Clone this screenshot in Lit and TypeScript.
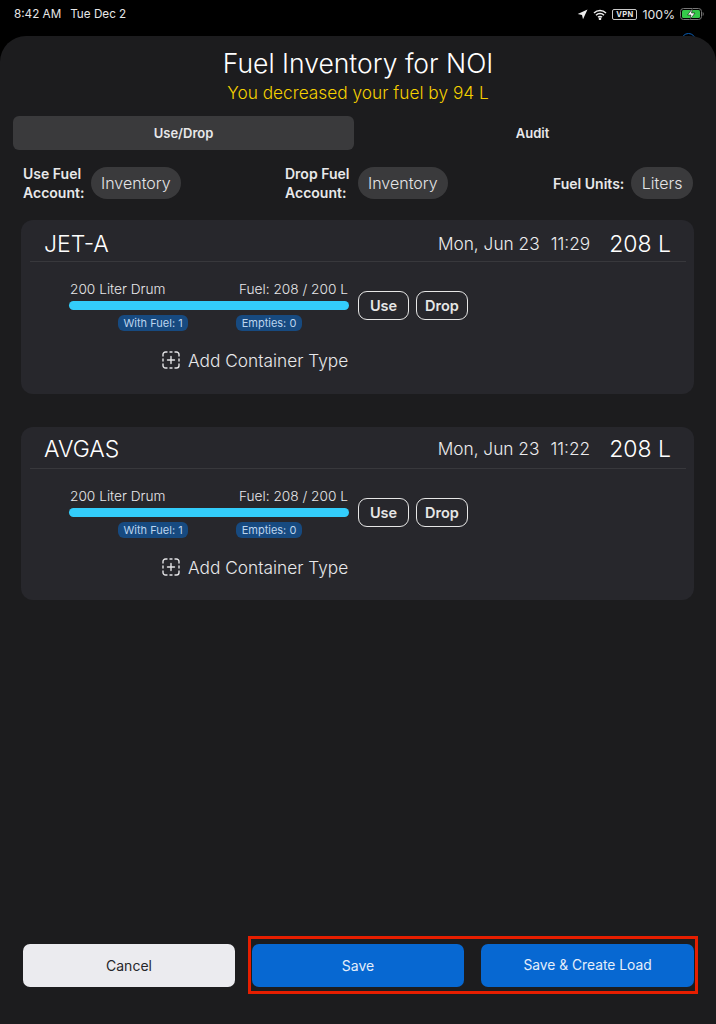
import { LitElement, html, css, svg } from 'lit';
import { customElement } from 'lit/decorators.js';

const cards = [
  { name: 'JET-A', date: 'Mon, Jun 23', time: '11:29', total: '208 L' },
  { name: 'AVGAS', date: 'Mon, Jun 23', time: '11:22', total: '208 L' },
];

const addIcon = svg`
  <svg class="add-icon" viewBox="0 0 18 18" width="18" height="18" fill="none" stroke="#e4e4e6" stroke-width="1.4" stroke-linecap="round">
    <path d="M1 5V3.5A2.5 2.5 0 0 1 3.5 1H5M13 1h1.5A2.5 2.5 0 0 1 17 3.5V5M17 13v1.5a2.5 2.5 0 0 1-2.5 2.5H13M5 17H3.5A2.5 2.5 0 0 1 1 14.5V13" />
    <path d="M9 5.5v7M5.5 9h7M8 1h2M8 17h2M1 8v2M17 8v2" />
  </svg>
`;

@customElement('app-root')
export class AppRoot extends LitElement {
  static styles = css`
    :host {
      display: block;
      width: 716px;
      height: 1024px;
      overflow: hidden;
      background: #000;
      color: #f2f2f4;
      font-family: Inter, 'Liberation Sans', sans-serif;
      position: relative;
    }

    .status {
      height: 36px;
      box-sizing: border-box;
      padding: 0 14px 8px;
      display: flex;
      align-items: center;
      justify-content: space-between;
      font-size: 11.7px;
      color: #e6e6e6;
    }

    .status-left {
      display: flex;
      gap: 9px;
    }

    .status-right {
      display: flex;
      align-items: center;
      gap: 5px;
      margin-right: -2px;
      font-size: 12.3px;
    }

    .vpn {
      font-size: 7.5px;
      font-weight: 700;
      line-height: 9px;
      padding: 0 3px;
      border: 1px solid #c8c8c8;
      border-radius: 2px;
      letter-spacing: 0.3px;
    }

    .peek {
      position: absolute;
      left: 681px;
      top: 33px;
      width: 13px;
      height: 13px;
      border: 1.5px solid #0a5fb8;
      border-radius: 50%;
    }

    .sheet {
      position: relative;
      height: 988px;
      box-sizing: border-box;
      background: #1c1c1e;
      border-radius: 26px 26px 0 0;
      display: flex;
      flex-direction: column;
    }

    .title {
      margin-top: 11px;
      text-align: center;
      font-size: 26.5px;
      line-height: 32px;
      font-weight: 300;
      color: #fff;
    }

    .subtitle {
      margin-top: 2px;
      text-align: center;
      font-size: 17.3px;
      line-height: 24px;
      font-weight: 300;
      color: #f5d000;
    }

    .segments {
      margin: 11px 13px 0;
      display: grid;
      grid-template-columns: 341px 1fr;
      height: 34px;
      font-size: 13px;
      font-weight: 600;
      color: #e8e8ea;
    }

    .segment {
      display: flex;
      align-items: center;
      justify-content: center;
      border-radius: 6px;
    }

    .segment.active {
      background: #3a3a3c;
    }

    .segment.audit {
      padding-left: 8px;
    }

    .accounts {
      margin: 14px 23px 0;
      height: 32px;
      display: grid;
      grid-template-columns: 262px 267px 1fr;
      font-size: 14px;
      font-weight: 600;
      line-height: 19px;
      color: #e8e8ea;
    }

    .account {
      display: flex;
      align-items: center;
    }

    .account-label {
      width: 68px;
    }

    .account-label.wide {
      width: 73px;
    }

    .account.units {
      justify-content: flex-end;
      gap: 7px;
    }

    .pill {
      height: 32px;
      box-sizing: border-box;
      padding: 0 10px;
      display: flex;
      align-items: center;
      border-radius: 16px;
      background: #3a3a3c;
      font-size: 16px;
      font-weight: 300;
      color: #e4e4e6;
    }

    .units .pill {
      padding: 0 10.5px;
    }

    .card {
      margin: 24px 22px 0 21px;
      height: 174px;
      box-sizing: border-box;
      padding: 0 8px 0 9px;
      border-radius: 12px;
      background: #27272c;
    }

    .card + .card {
      margin-top: 33px;
      height: 173px;
    }

    .card-head {
      height: 42px;
      box-sizing: border-box;
      padding: 6px 15px 0 14px;
      display: flex;
      align-items: center;
      border-bottom: 1px solid #38383c;
      font-weight: 300;
      color: #fff;
    }

    .card + .card .card-head {
      padding-top: 2px;
    }

    .fuel-name {
      font-size: 23px;
      flex: 1;
    }

    .fuel-date {
      font-size: 17.3px;
      display: flex;
      gap: 11px;
      color: #ececee;
    }

    .fuel-total {
      font-size: 23px;
      margin-left: 19px;
    }

    .container-row {
      margin: 18px 0 0 39px;
      display: flex;
      align-items: flex-start;
      gap: 9px;
    }

    .container {
      width: 280px;
    }

    .container-labels {
      display: flex;
      justify-content: space-between;
      padding: 0 1px;
      font-size: 13.7px;
      line-height: 18px;
      font-weight: 300;
      color: #e8e8ea;
    }

    .bar {
      margin-top: 3px;
      height: 9px;
      border-radius: 5px;
      background: #33cdfb;
    }

    .counts {
      margin-top: 5px;
      display: flex;
      padding-left: 49px;
      gap: 48px;
    }

    .count {
      height: 16px;
      padding: 0 5.5px;
      display: flex;
      align-items: center;
      border-radius: 6px;
      background: #174a80;
      font-size: 11px;
      color: #bcd4ee;
    }

    .actions {
      display: flex;
      gap: 7px;
      margin-top: 11px;
    }

    .outline {
      height: 29px;
      width: 51px;
      box-sizing: border-box;
      display: flex;
      align-items: center;
      justify-content: center;
      border: 1.5px solid #e6e6e6;
      border-radius: 9px;
      font-size: 14.5px;
      font-weight: 600;
      color: #e6e6e6;
    }

    .outline.drop {
      width: 52px;
    }

    .add {
      margin: 17px 0 0 132px;
      display: flex;
      align-items: center;
      gap: 8px;
      height: 24px;
      font-size: 17.3px;
      font-weight: 300;
      color: #e8e8ea;
    }

    .footer {
      margin-top: auto;
      padding: 0 18px 30px 23px;
      display: flex;
      align-items: center;
      gap: 13px;
    }

    .btn {
      height: 43px;
      width: 212px;
      flex: none;
      display: flex;
      align-items: center;
      justify-content: center;
      border-radius: 7px;
      font-size: 14px;
    }

    .btn.cancel {
      background: #ebebef;
      color: #26262a;
    }

    .btn.primary {
      background: #0768d2;
      color: #e4eefa;
    }

    .btn.wide {
      width: 213px;
      font-size: 13.8px;
    }

    .highlight {
      box-sizing: border-box;
      width: 450px;
      height: 58px;
      padding: 0 1px;
      display: flex;
      align-items: center;
      justify-content: space-between;
      border: 3px solid #e61e00;
    }

    .accounts + .card {
      margin-top: 24px;
    }
  `;

  private renderCard(card: (typeof cards)[number]) {
    return html`
      <section class="card">
        <div class="card-head">
          <span class="fuel-name">${card.name}</span>
          <span class="fuel-date"><span>${card.date}</span><span>${card.time}</span></span>
          <span class="fuel-total">${card.total}</span>
        </div>
        <div class="container-row">
          <div class="container">
            <div class="container-labels">
              <span>200 Liter Drum</span>
              <span>Fuel: 208 / 200 L</span>
            </div>
            <div class="bar"></div>
            <div class="counts">
              <span class="count">With Fuel: 1</span>
              <span class="count">Empties: 0</span>
            </div>
          </div>
          <div class="actions">
            <span class="outline">Use</span>
            <span class="outline drop">Drop</span>
          </div>
        </div>
        <div class="add">${addIcon}<span>Add Container Type</span></div>
      </section>
    `;
  }

  render() {
    return html`
      <div class="status">
        <div class="status-left"><span>8:42 AM</span><span>Tue Dec 2</span></div>
        <div class="status-right">
          <svg width="11" height="11" viewBox="0 0 11 11"><path d="M10.5.5 6 10.3 5 6 .7 5z" fill="#eee" /></svg>
          <svg width="14" height="11" viewBox="0 0 14 11" fill="none" stroke="#eee" stroke-width="1.5">
            <path d="M1 4a8.6 8.6 0 0 1 12 0M3 6.2a5.7 5.7 0 0 1 8 0M5 8.3a2.8 2.8 0 0 1 4 0" />
            <circle cx="7" cy="9.8" r=".6" fill="#eee" />
          </svg>
          <span class="vpn">VPN</span>
          <span>100%</span>
          <svg width="24" height="12" viewBox="0 0 24 12">
            <rect x=".5" y=".5" width="21" height="11" rx="3" fill="none" stroke="#777" />
            <rect x="2" y="2" width="18" height="8" rx="1.5" fill="#35c94a" />
            <path d="M22.7 4v4a2 2 0 0 0 1-2 2 2 0 0 0-1-2z" fill="#777" />
            <path d="M12.5 .5 7.5 7H11l-1 4.5L15 5h-3.5z" fill="#fff" stroke="#111" stroke-width=".6" />
          </svg>
        </div>
      </div>
      <span class="peek"></span>
      <main class="sheet">
        <div class="title">Fuel Inventory for NOI</div>
        <div class="subtitle">You decreased your fuel by 94 L</div>
        <div class="segments">
          <div class="segment active">Use/Drop</div>
          <div class="segment audit">Audit</div>
        </div>
        <div class="accounts">
          <div class="account"><span class="account-label">Use Fuel<br />Account:</span><span class="pill">Inventory</span></div>
          <div class="account"><span class="account-label wide">Drop Fuel<br />Account:</span><span class="pill">Inventory</span></div>
          <div class="account units"><span>Fuel Units:</span><span class="pill">Liters</span></div>
        </div>
        <div class="card-list">
          ${cards.map((card) => this.renderCard(card))}
        </div>
        <div class="footer">
          <div class="btn cancel">Cancel</div>
          <div class="highlight">
            <div class="btn primary">Save</div>
            <div class="btn primary wide">Save &amp; Create Load</div>
          </div>
        </div>
      </main>
    `;
  }
}
